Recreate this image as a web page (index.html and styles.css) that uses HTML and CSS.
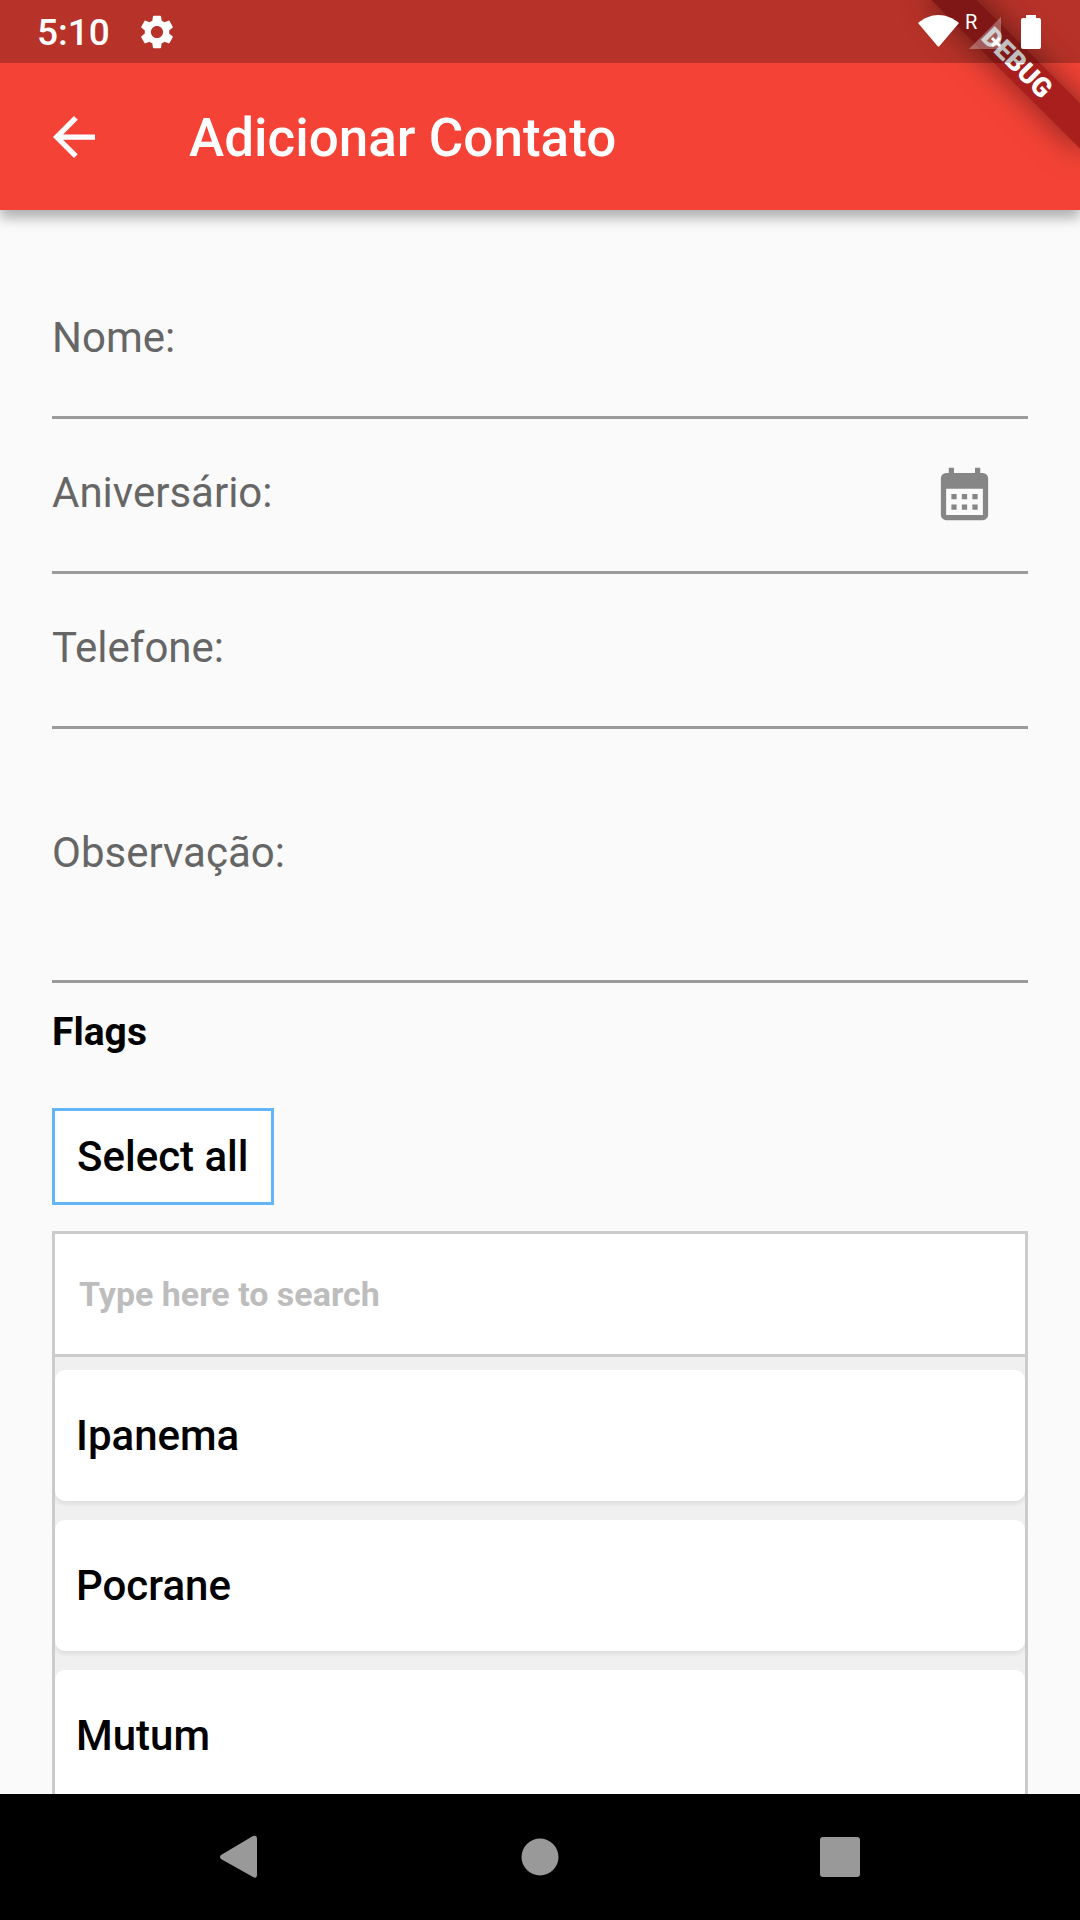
FILE: index.html
```html
<!DOCTYPE html>
<html lang="pt-BR">
<head>
  <meta charset="UTF-8" />
  <meta name="viewport" content="width=device-width, initial-scale=1.0"/>
  <title>Adicionar Contato</title>
  <link rel="stylesheet" href="styles.css">
</head>
<body>

  <header class="header">
    <div class="status-bar">
      <span class="clock">5:10</span>
      <svg class="gear" viewBox="2 2 20 20"><path d="M19.14 12.94c.04-.3.06-.61.06-.94 0-.32-.02-.64-.07-.94l2.03-1.58c.18-.14.23-.41.12-.61l-1.92-3.32c-.12-.22-.37-.29-.59-.22l-2.39.96c-.5-.38-1.03-.7-1.62-.94l-.36-2.54c-.04-.24-.24-.41-.48-.41h-3.84c-.24 0-.43.17-.47.41l-.36 2.54c-.59.24-1.13.57-1.62.94l-2.39-.96c-.22-.08-.47 0-.59.22L2.74 8.87c-.12.21-.08.47.12.61l2.03 1.58c-.05.3-.09.63-.09.94s.02.64.07.94l-2.03 1.58c-.18.14-.23.41-.12.61l1.92 3.32c.12.22.37.29.59.22l2.39-.96c.5.38 1.03.7 1.62.94l.36 2.54c.05.24.24.41.48.41h3.84c.24 0 .44-.17.47-.41l.36-2.54c.59-.24 1.13-.56 1.62-.94l2.39.96c.22.08.47 0 .59-.22l1.92-3.32c.12-.22.07-.47-.12-.61l-2.01-1.58zM12 15.6c-1.98 0-3.6-1.62-3.6-3.6s1.62-3.6 3.6-3.6 3.6 1.62 3.6 3.6-1.62 3.6-3.6 3.6z"/></svg>
      <div class="status-icons">
        <svg class="wifi" viewBox="0 0 41 32"><path d="M0 8C6 3 13 0 20.500 0S35 3 41 8L21.500 31Q20.500 32 19.500 31Z"/></svg>
        <span class="roaming">R</span>
        <svg class="signal" viewBox="0 0 32 32">
          <path fill-opacity="0.3" d="M32 0V32H0Z"/>
          <path stroke="white" stroke-width="3" d="M23 21L31 29M31 21L23 29"/>
        </svg>
        <svg class="battery" viewBox="0 0 20 34"><path d="M5 0H15V3H18Q20 3 20 5V32Q20 34 18 34H2Q0 34 0 32V5Q0 3 2 3H5Z"/></svg>
      </div>
    </div>
    <div class="app-bar">
      <button class="back" aria-label="Voltar">
        <svg viewBox="4 4 16 16"><path d="M20 11H7.830l5.590-5.590L12 4l-8 8 8 8 1.410-1.410L7.830 13H20v-2z"/></svg>
      </button>
      <h1 class="title">Adicionar Contato</h1>
    </div>
    <div class="debug">DEBUG</div>
  </header>

  <main class="content">
    <div class="field">
      <label for="nome">Nome:</label>
      <input type="text" id="nome">
    </div>
    <div class="field">
      <label for="aniversario">Aniversário:</label>
      <input type="text" id="aniversario">
      <button class="calendar" aria-label="Escolher data">
        <svg viewBox="0 0 24 24"><path fill-rule="evenodd" d="M6 1H8V3H16V1H18V3H19A2 2 0 0 1 21 5V19A2 2 0 0 1 19 21H5A2 2 0 0 1 3 19V5A2 2 0 0 1 5 3H6ZM5 9V19H19V9ZM7 11H9V13H7ZM11 11H13V13H11ZM15 11H17V13H15ZM7 15H9V17H7ZM11 15H13V17H11ZM15 15H17V17H15Z"/></svg>
      </button>
    </div>
    <div class="field">
      <label for="telefone">Telefone:</label>
      <input type="tel" id="telefone">
    </div>
    <div class="field tall">
      <label for="observacao">Observação:</label>
      <input type="text" id="observacao">
    </div>

    <h2 class="flags">Flags</h2>
    <button class="select-all">Select all</button>

    <div class="picker">
      <input class="search" type="text" placeholder="Type here to search" aria-label="Type here to search">
      <div class="options">
        <button class="option">Ipanema</button>
        <button class="option">Pocrane</button>
        <button class="option">Mutum</button>
      </div>
    </div>
  </main>

  <nav class="nav-bar">
    <button aria-label="Back"><svg viewBox="0 0 42 42"><path d="M34 0Q38 -1 38 3V39Q38 43 34 41L2 23Q0 21 2 19Z"/></svg></button>
    <button aria-label="Home"><svg viewBox="0 0 42 42"><circle cx="21" cy="21" r="18.500"/></svg></button>
    <button aria-label="Recents"><svg viewBox="0 0 42 42"><rect x="1" y="1" width="40" height="40" rx="3"/></svg></button>
  </nav>

</body>
</html>
```
FILE: styles.css
```css
* {
  box-sizing: border-box;
}

body {
  margin: 0;
  height: 100vh;
  display: flex;
  flex-direction: column;
  overflow: hidden;
  background: #fafafa;
  font-family: Roboto, sans-serif;
  font-size: 42px;
  line-height: 49px;
}

button,
input {
  margin: 0;
  padding: 0;
  border: none;
  background: none;
  font: inherit;
}

button {
  cursor: pointer;
}

svg {
  display: block;
  overflow: visible;
}

.header {
  position: relative;
  flex-shrink: 0;
  background: #f44336;
  color: white;
  box-shadow: 0 8px 12px rgba(0, 0, 0, 0.3);
}

/* the status bar tints whatever is under it, the ribbon included */
.status-bar {
  position: relative;
  z-index: 2;
  display: flex;
  align-items: center;
  height: 63px;
  padding: 0 39px 0 37px;
  background: rgba(0, 0, 0, 0.25);
}

.status-bar svg {
  fill: white;
}

.clock {
  padding-top: 2px;
  font-size: 37px;
  font-weight: 500;
  line-height: 43px;
}

.gear {
  width: 34px;
  height: 34px;
  margin-left: 30px;
}

.status-icons {
  display: flex;
  margin-left: auto;
}

.wifi {
  width: 41px;
  height: 32px;
}

.roaming {
  width: 10px;
  margin-left: 6px;
  font-size: 20px;
  line-height: 14px;
}

.signal {
  width: 32px;
  height: 32px;
  margin: 2px 20px 0 -6px;
}

.battery {
  width: 20px;
  height: 34px;
}

.app-bar {
  display: flex;
  align-items: center;
  height: 147px;
  padding: 0 53px;
}

.back svg {
  width: 42px;
  height: 42px;
  fill: white;
}

.title {
  margin: 0 0 0 94px;
  padding-top: 2px;
  font-size: 53px;
  font-weight: 500;
  line-height: 62px;
}

.debug {
  position: absolute;
  z-index: 1;
  top: 47px;
  right: -42px;
  width: 210px;
  transform: rotate(45deg);
  background: rgba(147, 22, 22, 0.78);
  box-shadow: 0 0 32px rgba(0, 0, 0, 0.5);
  font-size: 27px;
  font-weight: 900;
  line-height: 32px;
  text-align: center;
}

.content {
  flex: 1;
  min-height: 0;
  overflow: hidden;
  padding: 54px 52px 0;
}

.field {
  display: flex;
  align-items: center;
  height: 155px;
  border-bottom: 3px solid #9b9b9b;
  color: #666;
}

.field label {
  padding-bottom: 5px;
}

.field input {
  flex: 1;
  min-width: 0;
  height: 100%;
  outline: none;
}

.tall {
  height: 254px;
}

.calendar {
  padding: 3px 32px 0;
}

.calendar svg {
  width: 63px;
  height: 63px;
  fill: #868686;
}

.flags {
  margin: 25px 0 52px;
  font-size: 39px;
  font-weight: 700;
  line-height: 48px;
}

.select-all {
  padding: 21px 22px;
  border: 3px solid #64b5f6;
  background: white;
  font-weight: 500;
}

.picker {
  margin-top: 26px;
  border: 3px solid #ccc;
  background: #f0f0f0;
}

.search {
  display: block;
  width: 100%;
  height: 123px;
  padding: 0 24px;
  border-bottom: 3px solid #ccc;
  background: white;
  font-size: 34px;
  font-weight: 700;
  outline: none;
}

.search::placeholder {
  color: #bdbdbd;
}

.options {
  display: flex;
  flex-direction: column;
  gap: 19px;
  padding: 13px 0;
}

.option {
  padding: 41px 21px;
  border-radius: 10px;
  background: white;
  box-shadow: 0 4px 3px rgba(0, 0, 0, 0.06);
  font-weight: 500;
  text-align: left;
}

.nav-bar {
  display: flex;
  justify-content: space-between;
  align-items: center;
  flex-shrink: 0;
  height: 126px;
  padding: 0 219px;
  background: black;
}

.nav-bar svg {
  width: 42px;
  height: 42px;
  fill: #999;
}
```
